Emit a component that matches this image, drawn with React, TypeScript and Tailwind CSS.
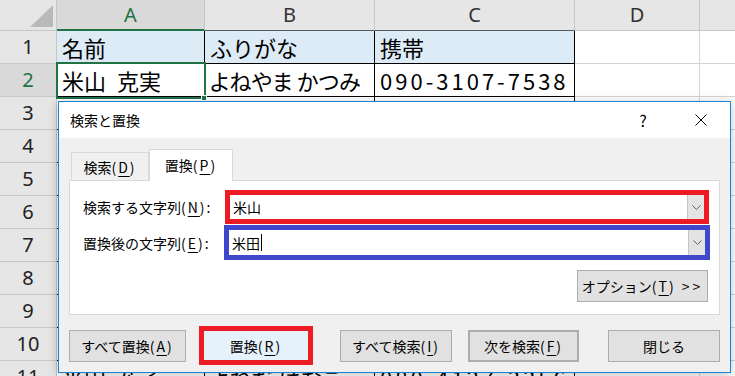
import clsx from "clsx";

const jp = "font-['Noto_Sans_CJK_JP',sans-serif]";

type RowData = { n: number; cells: string[]; fill?: boolean };

const rows: RowData[] = [
  { n: 1, cells: ["名前", "ふりがな", "携帯"], fill: true },
  { n: 2, cells: ["米山\u2002克実", "よねやま かつみ", "090-3107-7538"] },
  { n: 3, cells: ["", "", ""] },
  { n: 4, cells: ["", "", ""] },
  { n: 5, cells: ["", "", ""] },
  { n: 6, cells: ["", "", ""] },
  { n: 7, cells: ["", "", ""] },
  { n: 8, cells: ["", "", ""] },
  { n: 9, cells: ["", "", ""] },
  { n: 10, cells: ["", "", ""] },
  { n: 11, cells: ["米田\u2002花子", "よねだ はなこ", "080-4127-3356"] },
];

const colW = ["w-[148px]", "w-[170px]", "w-[200px]"];

function HeaderRow() {
  return (
    <div className="flex h-[31px] font-['Noto_Sans',sans-serif] text-[20px] leading-none text-[#333]">
      <div className="w-[57px] shrink-0 border-r border-b border-[#c6c6c6] bg-[#e6e6e6] flex items-end justify-end pr-[3px] pb-[3px]">
        <svg width="23" height="22" viewBox="0 0 23 22">
          <polygon points="23,0 23,22 0,22" fill="#b9b9b9" />
        </svg>
      </div>
      <div className="w-[148px] shrink-0 border-r border-[#c6c6c6] border-b-2 border-b-[#217346] bg-[#d9d9d9] text-[#217346] flex items-center justify-center">
        A
      </div>
      <div className="w-[170px] shrink-0 border-r border-b border-[#c6c6c6] border-b-[#595959] bg-[#e6e6e6] flex items-center justify-center">
        B
      </div>
      <div className="w-[200px] shrink-0 border-r border-b border-[#c6c6c6] border-b-[#595959] bg-[#e6e6e6] flex items-center justify-center">
        C
      </div>
      <div className="w-[125px] shrink-0 border-r border-b border-[#c6c6c6] bg-[#e6e6e6] flex items-center justify-center">
        D
      </div>
      <div className="flex-1 border-b border-[#c6c6c6] bg-[#e6e6e6]" />
    </div>
  );
}

function SheetRow({ row }: { row: RowData }) {
  const selected = row.n === 2;
  return (
    <div className="flex h-[33px] shrink-0">
      <div
        className={clsx(
          "w-[57px] shrink-0 border-r border-b border-[#c6c6c6] flex items-center justify-center font-['Noto_Sans',sans-serif] text-[20px] leading-none",
          selected ? "bg-[#d9d9d9] text-[#217346]" : "bg-[#e6e6e6] text-[#222]"
        )}
      >
        {row.n}
      </div>
      {row.cells.map((c, i) => (
        <div
          key={i}
          className={clsx(
            colW[i],
            "shrink-0 border-r border-b border-black flex items-center px-[5px] text-[22px] leading-none text-black whitespace-nowrap overflow-hidden",
            jp,
            row.fill ? "bg-[#ddebf7]" : "bg-white",
            i === 1 && !row.fill && "[font-feature-settings:'palt']",
            i === 2 && !row.fill && "tracking-[3px]"
          )}
        >
          {c}
        </div>
      ))}
      <div className="w-[125px] shrink-0 border-r border-b border-[#d4d4d4]" />
      <div className="flex-1 border-b border-[#d4d4d4]" />
    </div>
  );
}

function Chevron() {
  return (
    <svg width="9" height="5" viewBox="0 0 9 5">
      <polyline points="0.5,0.5 4.5,4.5 8.5,0.5" fill="none" stroke="#606060" strokeWidth="1" />
    </svg>
  );
}

function Combo({ text, caret }: { text: string; caret?: boolean }) {
  return (
    <div className="flex h-full bg-white">
      <div className="flex-1 flex items-center pl-[3px] text-[14px] leading-none">
        <span>{text}</span>
        {caret && <span className="ml-[1px] w-px h-[17px] bg-black" />}
      </div>
      <div className="w-[17px] h-full border-l border-[#c4c4c4] bg-[#e3e3e3] flex items-center justify-center">
        <Chevron />
      </div>
    </div>
  );
}

function Btn({ className, children }: { className?: string; children: React.ReactNode }) {
  return (
    <div
      className={clsx(
        "h-[32px] shrink-0 flex items-center justify-center border border-[#adadad] bg-[#e1e1e1] text-[14px] leading-none",
        className
      )}
    >
      {children}
    </div>
  );
}

function Key({ k }: { k: string }) {
  return (
    <span className="tracking-[2px]">
      (<span className="underline underline-offset-[3px]">{k}</span>)
    </span>
  );
}

function Dialog() {
  return (
    <div
      className={clsx(
        "absolute left-[58px] top-[101px] w-[673px] h-[272px] border border-[#1883d7] bg-[#f0f0f0] shadow-[0_2px_10px_rgba(0,0,0,0.25)] flex flex-col text-black",
        jp
      )}
    >
      <div className="h-[36px] shrink-0 bg-white flex items-center pl-[11px] text-[14px] leading-none">
        <span className="flex-1">検索と置換</span>
        <span className="w-[20px] text-center text-[16px]">?</span>
        <span className="ml-[40px] mr-[21px] w-[16px] flex justify-center">
          <svg width="12" height="12" viewBox="0 0 12 12">
            <path d="M0.5 0.5 L11.5 11.5 M11.5 0.5 L0.5 11.5" stroke="#000" strokeWidth="1" />
          </svg>
        </span>
      </div>

      <div className="flex-1 flex flex-col px-[10px]">
        <div className="mt-[11px] h-[31px] flex items-end pl-[2px] text-[14px] leading-none">
          <div className="w-[78px] h-[28px] border border-b-0 border-[#d9d9d9] bg-[#f0f0f0] flex items-center justify-center">
            検索<Key k="D" />
          </div>
          <div className="relative z-10 -mb-px w-[84px] h-[32px] border border-b-0 border-[#d9d9d9] bg-white flex items-center justify-center pb-[2px]">
            置換<Key k="P" />
          </div>
        </div>

        <div className="h-[135px] border border-[#d9d9d9] bg-white flex flex-col text-[14px] leading-none">
          <div className="mt-[9px] h-[34px] flex items-center pl-[13px]">
            <div className="w-[142px] shrink-0">
              検索する文字列<Key k="N" />:
            </div>
            <div className="w-[484px] h-[34px] border-[5px] border-[#ed1c24]">
              <Combo text="米山" />
            </div>
          </div>
          <div className="mt-px h-[35px] flex items-center pl-[13px]">
            <div className="w-[142px] shrink-0">
              置換後の文字列<Key k="E" />:
            </div>
            <div className="-ml-px w-[486px] h-[35px] border-[5px] border-[#3f48cc]">
              <Combo text="米田" caret />
            </div>
          </div>
          <div className="mt-[10px] flex justify-end pr-[11px]">
            <Btn className="w-[131px]">
              オプション<Key k="T" />
              <span className="ml-[6px] tracking-[3px]">&gt;&gt;</span>
            </Btn>
          </div>
        </div>

        <div className="mt-[11px] h-[39px] flex items-center">
          <Btn className="w-[117px]">
            すべて置換<Key k="A" />
          </Btn>
          <div className="ml-[13px] w-[115px] h-[39px] border-[5px] border-[#ed1c24] bg-[#e5f1fb] flex items-center justify-center text-[14px] leading-none">
            置換<Key k="R" />
          </div>
          <Btn className="ml-[27px] w-[112px]">
            すべて検索<Key k="I" />
          </Btn>
          <Btn className="ml-[16px] w-[111px] border-2 border-[#0078d7]">
            次を検索<Key k="F" />
          </Btn>
          <Btn className="ml-[29px] w-[112px]">閉じる</Btn>
        </div>
      </div>
    </div>
  );
}

export default function App() {
  return (
    <div className="relative w-[735px] h-[376px] overflow-hidden bg-white">
      <HeaderRow />
      {rows.map((r) => (
        <SheetRow key={r.n} row={r} />
      ))}
      <div className="absolute left-[56px] top-[62px] w-[150px] h-[37px] border-2 border-[#217346]" />
      <div className="absolute left-[201px] top-[95px] w-[6px] h-[6px] bg-[#217346] border border-white" />
      <Dialog />
    </div>
  );
}
